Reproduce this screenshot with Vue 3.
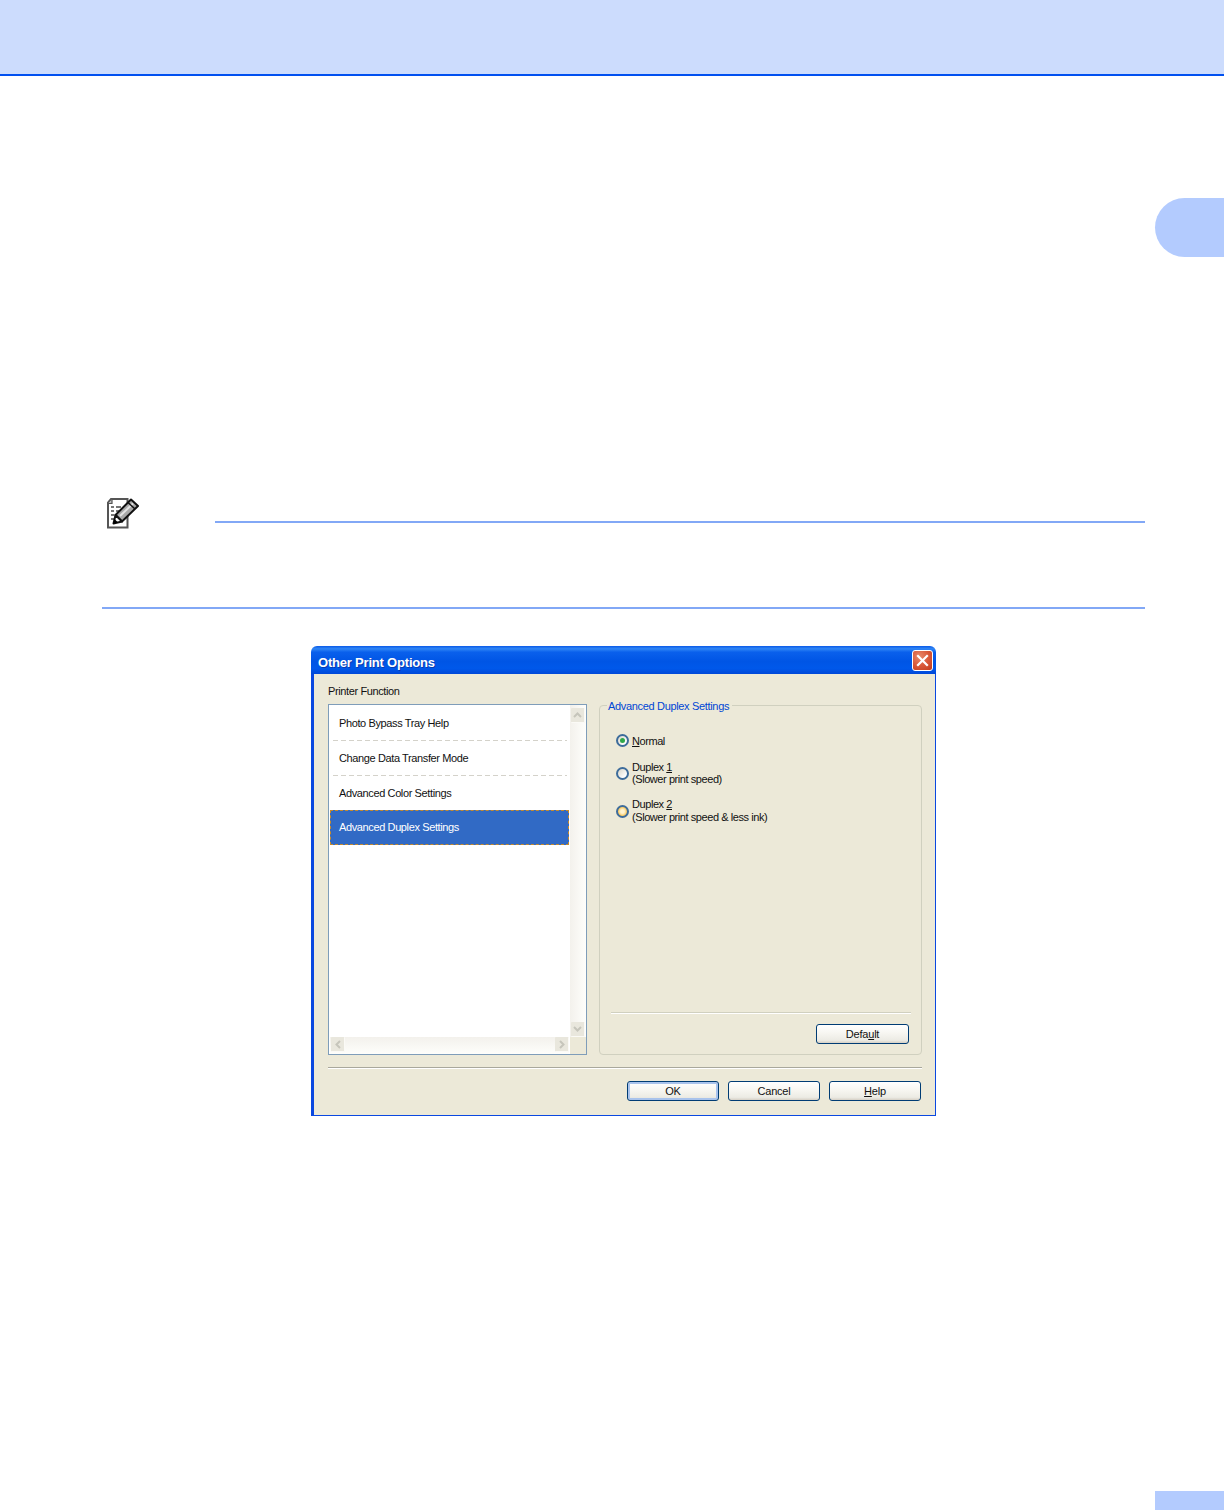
<script setup>
const items = [
  { label: 'Photo Bypass Tray Help', cls: 'dashed' },
  { label: 'Change Data Transfer Mode', cls: 'dashed' },
  { label: 'Advanced Color Settings', cls: 'plain' },
  { label: 'Advanced Duplex Settings', cls: 'selected' }
]
const buttons = [
  { pre: 'OK', key: '', post: '', cls: 'default' },
  { pre: 'Cancel', key: '', post: '', cls: '' },
  { pre: '', key: 'H', post: 'elp', cls: '' }
]
</script>

<template>
  <div class="page">
    <header class="top-band"></header>
    <div class="side-tab"></div>

    <section class="note">
      <svg class="note-icon" width="34" height="32" viewBox="0 0 34 32">
        <path d="M5 1 H21.5 V29.5 H2 V4.5 Z" fill="#fff" stroke="#555" stroke-width="2" />
        <path d="M2 5.5 H6 V1.5" fill="#bbb" stroke="#555" stroke-width="1.2" />
        <path d="M5 9h3M10 9h5M5 13h3M10 13h3M5 17h3M5 21h3" stroke="#777" stroke-width="1.8" />
        <path d="M25 1.5 L32 8 L16 23.5 L9.5 17 Z" fill="#a9a9a9" stroke="#111" stroke-width="2" stroke-linejoin="round" />
        <path d="M14 18 L27 5.5" stroke="#e4e4e4" stroke-width="2" />
        <path d="M22 4.5 L29 11" stroke="#111" stroke-width="1.6" />
        <path d="M9.5 17 L16 23.5 L7.5 25.5 Z" fill="#fff" stroke="#111" stroke-width="2" stroke-linejoin="round" />
        <path d="M7 26 L8.5 21 L12 24.5 Z" fill="#000" />
      </svg>
      <div class="note-rule"></div>
    </section>
    <div class="note-end"></div>

    <div class="dialog">
      <div class="titlebar">
        <span class="title">Other Print Options</span>
        <button class="close" aria-label="Close">
          <svg width="13" height="13" viewBox="0 0 13 13">
            <path d="M2 2 L11 11 M11 2 L2 11" stroke="#fff" stroke-width="2.2" stroke-linecap="square" />
          </svg>
        </button>
      </div>

      <div class="body">
        <div class="columns">
          <div class="left">
            <div class="label">Printer Function</div>
            <div class="listbox">
              <div class="items">
                <div v-for="item in items" :key="item.label" class="row" :class="item.cls">{{ item.label }}</div>
              </div>
              <div class="vscroll">
                <span class="sbtn"><svg width="9" height="6" viewBox="0 0 9 6"><path d="M1 5 L4.5 1.5 L8 5" fill="none" stroke="#c6c5bb" stroke-width="2" /></svg></span>
                <span class="sbtn"><svg width="9" height="6" viewBox="0 0 9 6"><path d="M1 1 L4.5 4.5 L8 1" fill="none" stroke="#c6c5bb" stroke-width="2" /></svg></span>
              </div>
              <div class="hscroll">
                <span class="sbtn"><svg width="6" height="9" viewBox="0 0 6 9"><path d="M5 1 L1.5 4.5 L5 8" fill="none" stroke="#c6c5bb" stroke-width="2" /></svg></span>
                <span class="sbtn"><svg width="6" height="9" viewBox="0 0 6 9"><path d="M1 1 L4.5 4.5 L1 8" fill="none" stroke="#c6c5bb" stroke-width="2" /></svg></span>
              </div>
              <div class="corner"></div>
            </div>
          </div>

          <div class="right">
            <fieldset class="group">
              <legend>Advanced Duplex Settings</legend>
              <div class="options">
                <div class="option">
                  <span class="radio checked"></span>
                  <span><u>N</u>ormal</span>
                </div>
                <div class="option">
                  <span class="radio"></span>
                  <span>Duplex <u>1</u><br />(Slower print speed)</span>
                </div>
                <div class="option tall">
                  <span class="radio hover"></span>
                  <span>Duplex <u>2</u><br />(Slower print speed &amp; less ink)</span>
                </div>
              </div>
              <div class="group-rule"></div>
              <div class="group-foot">
                <button class="btn">Defa<u>u</u>lt</button>
              </div>
            </fieldset>
          </div>
        </div>

        <div class="body-rule"></div>
        <div class="actions">
          <button v-for="b in buttons" :key="b.pre + b.post" class="btn" :class="b.cls">{{ b.pre }}<u v-if="b.key">{{ b.key }}</u>{{ b.post }}</button>
        </div>
      </div>
    </div>

    <div class="page-tab"></div>
  </div>
</template>

<style scoped>
* { box-sizing: border-box; }
.page {
  width: 1224px;
  height: 1510px;
  background: #fff;
  display: flex;
  flex-direction: column;
  overflow: hidden;
  font-family: "Liberation Sans", Arial, sans-serif;
}
.top-band {
  height: 76px;
  flex: none;
  background: #ccdcfd;
  border-bottom: 2px solid #0050f0;
}
.side-tab {
  flex: none;
  align-self: flex-end;
  width: 69px;
  height: 59px;
  margin-top: 122px;
  background: #b3cbfe;
  border-radius: 29.5px 0 0 29.5px;
}
.note {
  flex: none;
  margin: 241px 79px 0 102px;
  height: 32px;
  display: flex;
  justify-content: space-between;
}
.note-icon { margin-left: 4px; }
.note-rule {
  width: 930px;
  height: 2px;
  margin-top: 23px;
  background: #82a8f6;
}
.note-end {
  flex: none;
  margin: 77px 79px 0 102px;
  height: 2px;
  background: #82a8f6;
}
.dialog {
  flex: none;
  width: 625px;
  height: 470px;
  margin: 37px 0 0 311px;
  display: flex;
  flex-direction: column;
  color: #111;
  font-size: 11px;
  line-height: 12px;
  letter-spacing: -0.38px;
}
.titlebar {
  flex: none;
  height: 28px;
  border-radius: 6px 6px 0 0;
  background: linear-gradient(180deg, #0a5ae8 0%, #2f86f5 10%, #0a60ec 22%, #0055e5 55%, #0058ea 80%, #0048d8 100%);
  display: flex;
  align-items: center;
  justify-content: space-between;
  padding: 0 3px 0 7px;
}
.title {
  color: #fff;
  padding-top: 5px;
  font: bold 13px "Liberation Sans", Arial, sans-serif;
  letter-spacing: -0.2px;
  text-shadow: 1px 1px 0 #0a3cb0;
}
.close {
  width: 21px;
  height: 21px;
  padding: 0;
  border: 1px solid #fff;
  border-radius: 3px;
  background: radial-gradient(circle at 35% 30%, #e88a6c 0%, #d9593a 50%, #c23c1c 100%);
  display: flex;
  align-items: center;
  justify-content: center;
}
.body {
  flex: 1;
  background: #ece9d8;
  border-left: 3px solid #0a48e0;
  border-right: 1px solid #0a48e0;
  border-bottom: 1px solid #0a48e0;
  padding: 10px 13px 13px 14px;
  display: flex;
  flex-direction: column;
}
.columns {
  display: flex;
  gap: 12px;
  height: 371px;
  flex: none;
}
.left { width: 259px; flex: none; }
.label { height: 14px; margin-bottom: 6px; line-height: 14px; }
.listbox {
  height: 351px;
  border: 1px solid #7f9db9;
  background: #fff;
  display: grid;
  grid-template-columns: 241px 16px;
  grid-template-rows: 332px 17px;
}
.items { padding: 1px 0 0 1px; }
.row {
  height: 35px;
  line-height: 34px;
  padding-left: 9px;
  width: 239px;
  color: #111;
}
.row.dashed {
  margin: 0 2px 0 3px;
  width: 234px;
  padding-left: 6px;
  background: repeating-linear-gradient(90deg, #d4d2ca 0 5px, transparent 5px 8px) left bottom / 100% 1px no-repeat;
}
.row.plain { height: 34px; }
.row.selected {
  color: #fff;
  background: #316ac5;
  outline: 1px dashed #c58a2c;
  outline-offset: -1px;
}
.vscroll {
  background: linear-gradient(90deg, #f3f1ec, #fefefb);
  padding: 3px 1px 0 1px;
  display: flex;
  flex-direction: column;
  justify-content: space-between;
}
.hscroll {
  margin-left: 1px;
  padding: 0 0 2px 1px;
  width: 239px;
  background: linear-gradient(180deg, #f3f1ec, #fefefb);
  display: flex;
  justify-content: space-between;
  align-items: flex-end;
}
.corner { background: #ece9d8; }
.sbtn {
  width: 14px;
  height: 15px;
  background: #e9e7dd;
  border-right: 1px solid #fbfaf6;
  border-bottom: 1px solid #fbfaf6;
  border-radius: 1px;
  display: flex;
  align-items: center;
  justify-content: center;
}
.right {
  flex: 1;
  padding-top: 14px;
  display: flex;
}
.group {
  flex: 1;
  min-width: 0;
  margin: 0;
  padding: 0 10px 10px 11px;
  border: 1px solid #d0d0bf;
  border-radius: 4px;
  display: flex;
  flex-direction: column;
}
.group legend {
  color: #0046d5;
  padding: 2px 3px 0 1px;
  margin-left: -4px;
  line-height: 13px;
  letter-spacing: -0.33px;
}
.options {
  margin: 21px 0 0 5px;
  display: flex;
  flex-direction: column;
  gap: 14px;
  letter-spacing: -0.43px;
}
.option {
  display: flex;
  align-items: center;
  gap: 3px;
}
.option.tall {
  line-height: 13px;
  margin-top: -1px;
}
.radio {
  width: 13px;
  height: 13px;
  flex: none;
  border-radius: 50%;
  border: 2px solid #3d6c9b;
  background: linear-gradient(135deg, #d8d5c8, #ffffff 80%);
  position: relative;
}
.radio.checked::after {
  content: "";
  position: absolute;
  left: 2px;
  top: 2px;
  width: 5px;
  height: 5px;
  border-radius: 50%;
  background: #2fa84a;
}
.radio.hover {
  background: radial-gradient(circle at 50% 50%, #fff4d0 0 28%, #f9c24e 75%);
}
.group-rule {
  margin-top: auto;
  height: 2px;
  background: linear-gradient(180deg, #d0d0bf 50%, #fff 50%);
}
.group-foot {
  display: flex;
  justify-content: flex-end;
  margin-top: 10px;
  padding-right: 2px;
}
.btn {
  width: 93px;
  height: 20px;
  padding: 0;
  border: 1px solid #003c74;
  border-radius: 3px;
  background: linear-gradient(180deg, #fff 0%, #f7f6f1 45%, #ecebe4 85%, #d6d0c5 100%);
  color: #111;
  font: 11px "Liberation Sans", Arial, sans-serif;
  letter-spacing: -0.2px;
}
.btn.default {
  box-shadow: inset 0 0 0 2px #a9c3ec;
}
.body-rule {
  flex: none;
  margin-top: 12px;
  height: 2px;
  background: linear-gradient(180deg, #a9a89c 50%, #fff 50%);
}
.actions {
  flex: none;
  margin-top: 12px;
  padding-right: 1px;
  display: flex;
  justify-content: flex-end;
  gap: 9px;
}
.actions .btn { width: 92px; }
.page-tab {
  flex: none;
  align-self: flex-end;
  margin-top: auto;
  width: 69px;
  height: 19px;
  background: #b3cbfe;
}
</style>
